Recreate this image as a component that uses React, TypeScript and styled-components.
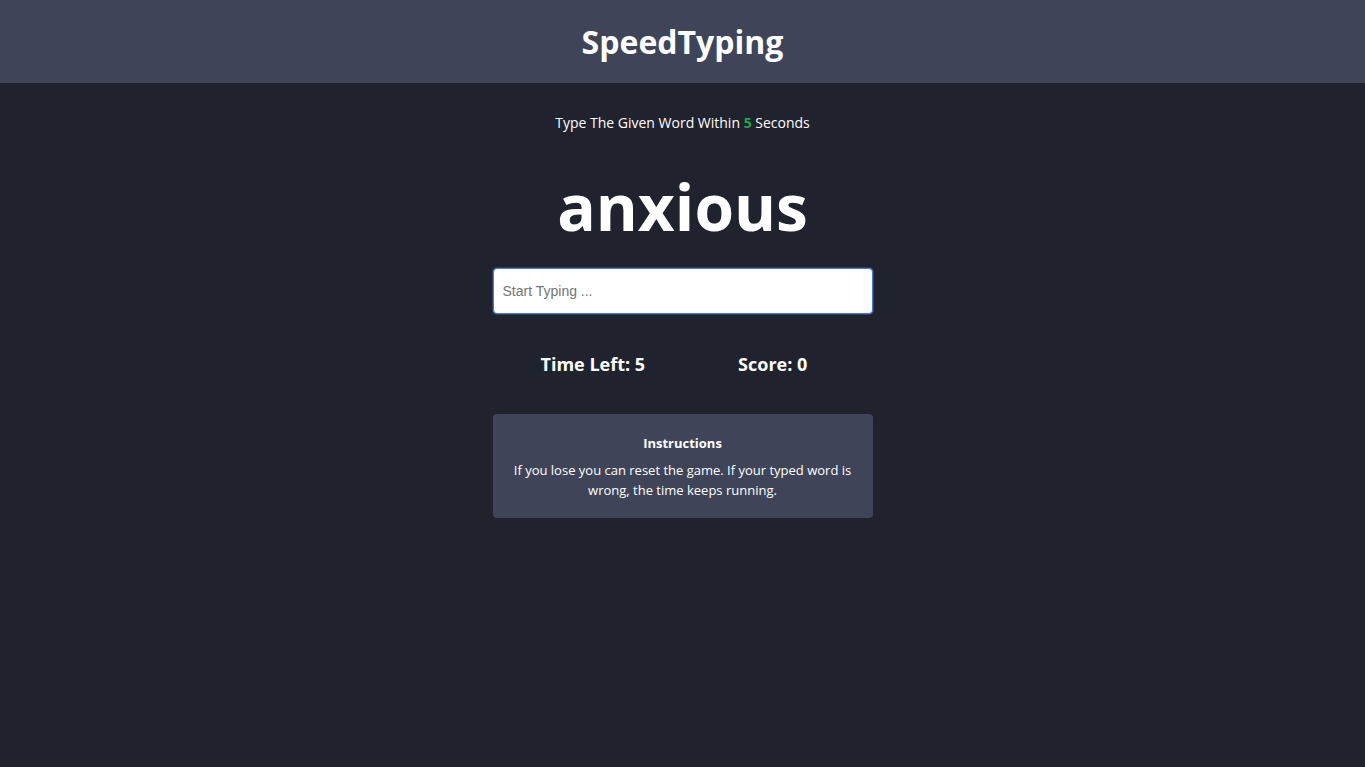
import React, { useState } from "react";
import styled, { createGlobalStyle } from "styled-components";

const GlobalStyle = createGlobalStyle`
  * {
    box-sizing: border-box;
  }
  body {
    margin: 0;
    background-color: #20222e;
    color: #ffffff;
    font-family: "Open Sans", "Noto Sans", sans-serif;
  }
`;

const Page = styled.div`
  min-height: 100vh;
  background-color: #20222e;
`;

const Header = styled.header`
  height: 83px;
  background-color: #3f4458;
  display: flex;
  align-items: center;
  justify-content: center;
`;

const Title = styled.h1`
  margin: 0;
  font-size: 32px;
  font-weight: 700;
  color: #ffffff;
`;

const Main = styled.main`
  display: flex;
  flex-direction: column;
  align-items: center;
  padding-top: 30px;
`;

const Lead = styled.p`
  margin: 0;
  font-size: 14px;
  line-height: 20px;
`;

const Seconds = styled.span`
  color: #1fa64a;
  font-weight: 700;
`;

const Word = styled.h2`
  margin: 29px 0 0;
  font-size: 64px;
  font-weight: 700;
  line-height: 90px;
`;

const Input = styled.input`
  margin-top: 16px;
  width: 380px;
  height: 46px;
  padding: 0 9px;
  border: 1px solid #4a78c8;
  border-radius: 4px;
  font-family: "Liberation Sans", Arial, sans-serif;
  font-size: 14px;
  color: #333333;
  outline: none;
  box-shadow: 0 0 0 1px rgba(74, 120, 200, 0.35);

  &::placeholder {
    color: #757575;
  }
`;

const Stats = styled.div`
  width: 380px;
  margin-top: 38px;
  display: flex;
  gap: 93px;
  padding-left: 48px;
`;

const Stat = styled.h3`
  margin: 0;
  font-size: 18px;
  font-weight: 700;
  line-height: 24px;
`;

const Card = styled.section`
  margin-top: 38px;
  width: 380px;
  padding: 19px 18px 18px;
  background-color: #3f4458;
  border-radius: 4px;
  text-align: center;
`;

const CardTitle = styled.h4`
  margin: 0 0 7px;
  font-size: 13px;
  font-weight: 700;
  line-height: 20px;
`;

const CardText = styled.p`
  margin: 0;
  font-size: 13px;
  line-height: 20px;
`;

const App: React.FC = () => {
  const [value, setValue] = useState("");
  const seconds = 5;
  const score = 0;

  return (
    <Page>
      <GlobalStyle />
      <Header>
        <Title>SpeedTyping</Title>
      </Header>
      <Main>
        <Lead>
          Type The Given Word Within <Seconds>{seconds}</Seconds> Seconds
        </Lead>
        <Word>anxious</Word>
        <Input
          autoFocus
          placeholder="Start Typing ..."
          value={value}
          onChange={(e) => setValue(e.target.value)}
        />
        <Stats>
          <Stat>{`Time Left: ${seconds}`}</Stat>
          <Stat>{`Score: ${score}`}</Stat>
        </Stats>
        <Card>
          <CardTitle>Instructions</CardTitle>
          <CardText>
            If you lose you can reset the game. If your typed word is wrong,
            the time keeps running.
          </CardText>
        </Card>
      </Main>
    </Page>
  );
};

export default App;
